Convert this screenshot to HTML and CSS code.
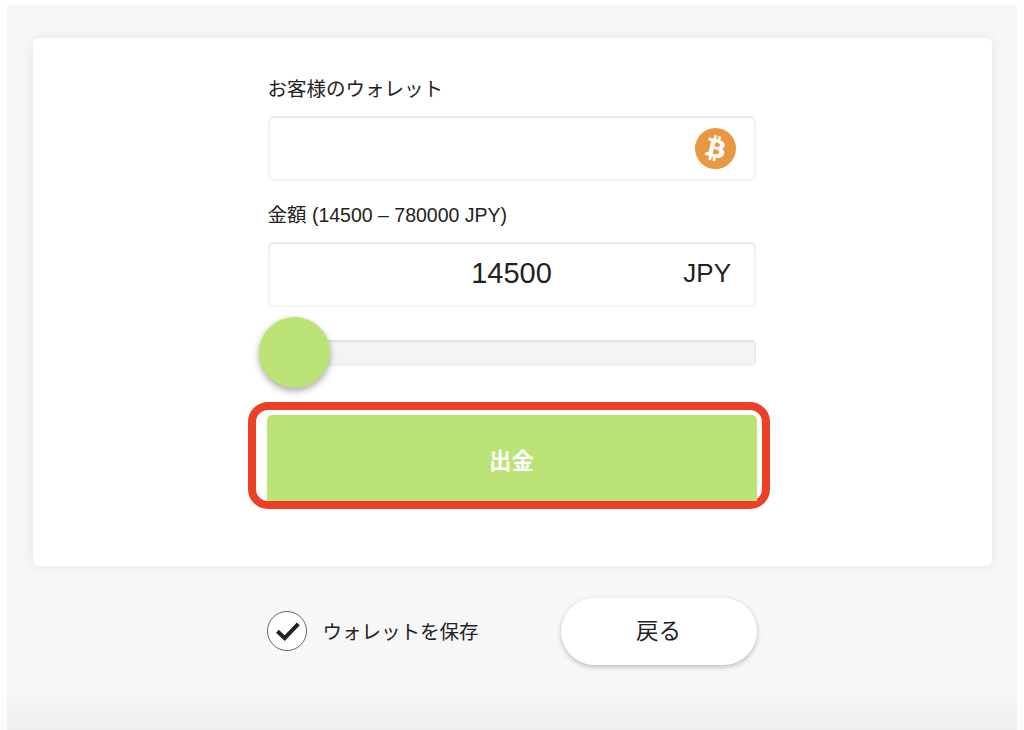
FILE: index.html
```html
<!DOCTYPE html>
<html lang="ja">
<head>
    <meta charset="UTF-8">
    <meta name="viewport" content="width=device-width, initial-scale=1.0">
    <title>出金</title>
    <link rel="stylesheet" href="styles.css">
</head>
<body>
    <div class="page">
        <section class="card">
            <form class="withdraw-form" id="withdraw-form">
                <label for="wallet">お客様のウォレット</label>
                <div class="field">
                    <input type="text" id="wallet">
                    <svg class="coin" viewBox="0 0 24 24">
                        <circle cx="12" cy="12" r="12" fill="#e8983e"/>
                        <path fill="#fff" stroke="#fff" stroke-width="0.25" fill-rule="evenodd" d="M17.288 10.291c.24-1.59-.974-2.45-2.64-3.03l.54-2.153-1.315-.33-.525 2.107c-.345-.087-.705-.167-1.064-.25l.526-2.127-1.32-.33-.54 2.165c-.285-.067-.565-.132-.84-.2l-1.815-.45-.35 1.407s.975.225.955.236c.535.136.63.486.615.766l-1.477 5.92c-.075.166-.24.406-.614.314.015.02-.96-.24-.96-.24l-.66 1.51 1.71.426.93.242-.54 2.19 1.32.327.54-2.17c.36.1.705.19 1.05.273l-.51 2.154 1.32.33.545-2.19c2.24.427 3.93.257 4.64-1.774.57-1.637-.03-2.58-1.217-3.196.854-.193 1.5-.76 1.68-1.93h.01zm-3.01 4.22c-.404 1.64-3.157.75-4.05.53l.72-2.9c.896.23 3.757.67 3.33 2.37zm.41-4.24c-.37 1.49-2.662.735-3.405.55l.654-2.64c.744.18 3.137.524 2.75 2.084z"/>
                    </svg>
                </div>

                <label for="amount">金額 (14500 – 780000 JPY)</label>
                <div class="field">
                    <input type="text" id="amount" value="14500">
                    <span class="currency">JPY</span>
                </div>

                <div class="slider">
                    <div class="slider-thumb"></div>
                </div>

                <div class="highlight">
                    <button type="submit" class="submit-btn">出金</button>
                </div>
            </form>
        </section>

        <footer class="actions">
            <div class="save-wallet">
                <svg class="check" viewBox="0 0 40 40">
                    <circle cx="20" cy="20" r="19.5" fill="#fff" stroke="#555" stroke-width="0.9"/>
                    <path d="M10.4 20.3 L17.7 27.2 L31.3 12.9" fill="none" stroke="#222" stroke-width="4"/>
                </svg>
                <span>ウォレットを保存</span>
            </div>
            <button type="button" class="back-btn">戻る</button>
        </footer>
    </div>
</body>
</html>
```

FILE: styles.css
```css
* {
    box-sizing: border-box;
}

body {
    margin: 0;
    height: 730px;
    padding: 5px 7px 0;
    overflow: hidden;
    background: linear-gradient(#fff 690px, #fafafa 730px);
    color: #222;
    font-family: "Liberation Sans", "Noto Sans CJK JP", sans-serif;
}

.page {
    height: 725px;
    padding: 32.5px 25.5px 0 25.5px;
    background: linear-gradient(#f7f7f7 685px, #eee 725px);
}

.card {
    height: 528px;
    padding-top: 36px;
    background-color: #fff;
    border-radius: 6px;
    box-shadow: 0 0 12px rgba(0, 0, 0, 0.08);
}

.withdraw-form {
    width: 488px;
    margin-left: 235px;
}

label {
    display: block;
    height: 42px;
    line-height: 30px;
    font-size: 19.5px;
    white-space: nowrap;
}

.field {
    display: grid;
    align-items: center;
    height: 65px;
    margin-bottom: 19px;
    border-radius: 6px;
    box-shadow: inset 0 2px 3px rgba(0, 0, 0, 0.05), inset 0 0 0 2px #f5f5f5;
}

.field > * {
    grid-area: 1 / 1;
}

.field input {
    width: 100%;
    height: 100%;
    padding: 0 0 2px;
    border: none;
    background: none;
    color: inherit;
    font-family: inherit;
    font-size: 29px;
    text-align: center;
}

.coin {
    justify-self: end;
    width: 41px;
    height: 41px;
    margin-right: 19.5px;
}

.currency {
    justify-self: end;
    margin-right: 24.5px;
    padding-bottom: 1px;
    font-size: 26px;
}

.slider {
    display: flex;
    align-items: center;
    height: 26px;
    margin-top: 33px;
    background-color: #f3f4f6;
    border-radius: 5px;
    box-shadow: inset 0 2px 3px rgba(0, 0, 0, 0.07), inset 0 0 0 2px #f0f0f1;
}

.slider-thumb {
    flex: none;
    width: 71px;
    height: 71px;
    margin-left: -9px;
    background-color: #bce375;
    border-radius: 50%;
    box-shadow: 0 3px 7px rgba(0, 0, 0, 0.35);
}

/* Frame around the submit button */
.highlight {
    width: 522.5px;
    height: 107px;
    margin: 36px 0 0 -20px;
    padding: 5px 5px 0 11px;
    border: 8px solid #ec4026;
    border-radius: 20px;
}

.submit-btn {
    display: block;
    width: 490px;
    height: 86px;
    padding: 3px 0 0;
    border: none;
    border-radius: 5px 5px 0 0;
    background-color: #bce375;
    color: #fff;
    font-family: inherit;
    font-size: 22.5px;
    font-weight: bold;
}

.actions {
    display: flex;
    align-items: center;
    justify-content: space-between;
    width: 490px;
    margin: 32px 0 0 234px;
}

.save-wallet {
    display: flex;
    align-items: center;
    gap: 16px;
    font-size: 19.5px;
}

.save-wallet span {
    padding-bottom: 2px;
}

.check {
    width: 40px;
    height: 40px;
}

.back-btn {
    width: 196px;
    height: 67px;
    padding: 0 0 4px;
    border: none;
    border-radius: 34px;
    background-color: #fff;
    color: #222;
    font-family: inherit;
    font-size: 22.5px;
    box-shadow: 0 2px 5px rgba(0, 0, 0, 0.24);
}
```
